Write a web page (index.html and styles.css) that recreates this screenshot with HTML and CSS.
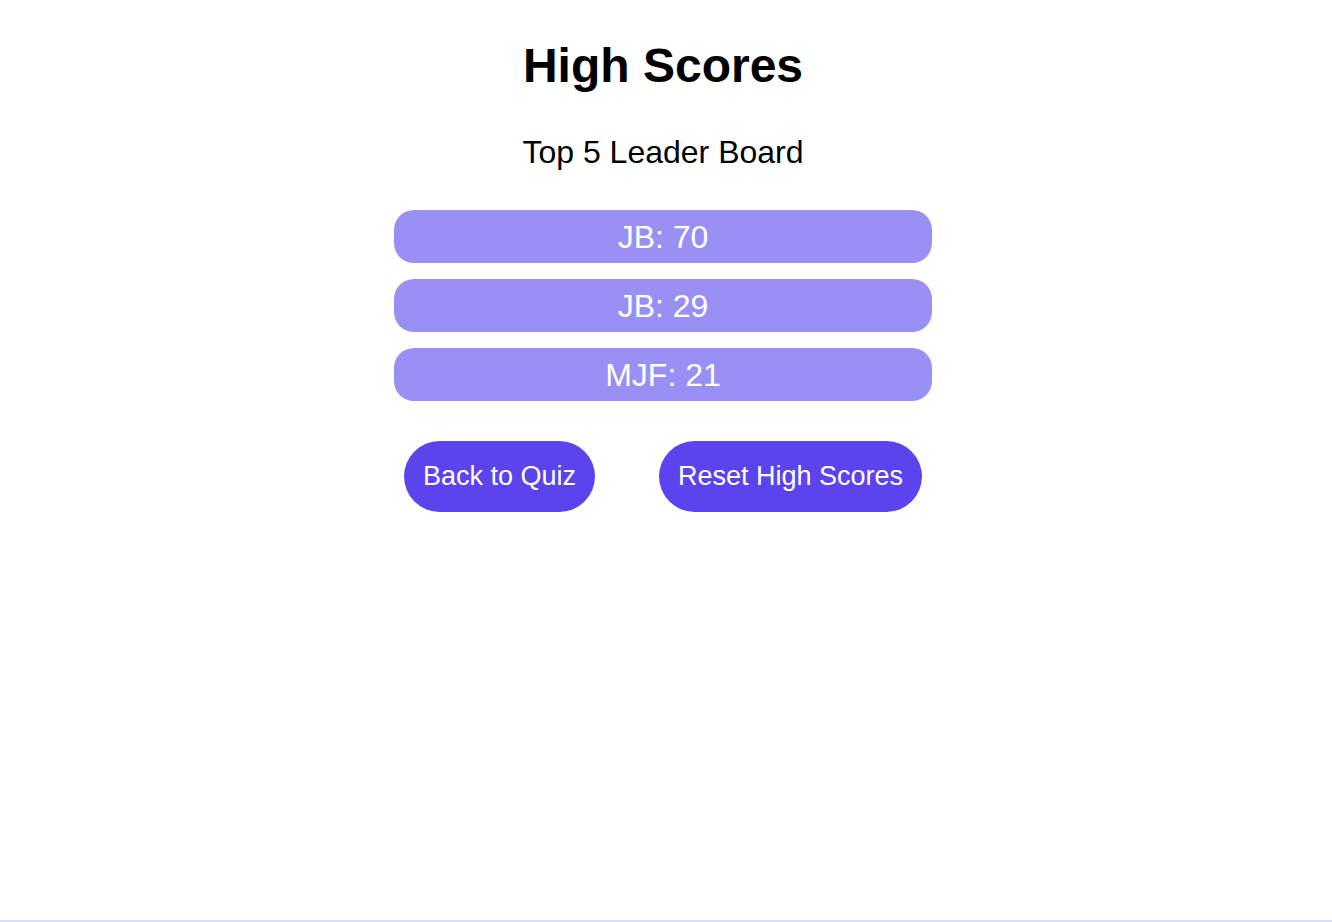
FILE: index.html
```html
<!DOCTYPE html>
<html lang="en">
<head>
<meta charset="utf-8">
<title>High Scores</title>
<link rel="stylesheet" href="styles.css">
</head>
<body>
<main class="board">
<h1 class="title">High Scores</h1>
<p class="subtitle">Top 5 Leader Board</p>
<ul class="scores">
<li class="score">JB: 70</li>
<li class="score">JB: 29</li>
<li class="score">MJF: 21</li>
</ul>
<div class="actions">
<button class="button" type="button">Back to Quiz</button>
<button class="button" type="button">Reset High Scores</button>
</div>
</main>
</body>
</html>
```
FILE: styles.css
```css
* {
  box-sizing: border-box;
}

body {
  margin: 0;
  min-height: 100vh;
  padding: 38px 6px 0 0;
  display: flex;
  flex-direction: column;
  align-items: center;
  background: #fff;
  border-bottom: 2px solid #d5e0fa;
  color: #000;
  font-family: Helvetica, "Liberation Sans", Arial, sans-serif;
}

.board {
  display: flex;
  flex-direction: column;
  text-align: center;
}

.title {
  margin: 0 0 40px;
  font-size: 48px;
  line-height: 56px;
}

.subtitle {
  margin: 0 0 40px;
  font-size: 32px;
  line-height: 36px;
}

.scores {
  display: grid;
  gap: 16px;
  margin: 0 0 40px;
  padding: 0;
  list-style: none;
}

.score {
  padding: 9px 8px 8px;
  border-radius: 20px;
  background: #9990f4;
  color: #fff;
  font-size: 32px;
  line-height: 36px;
}

.actions {
  display: flex;
  gap: 64px;
  padding: 0 10px;
}

.button {
  padding: 20px 19px;
  border: 0;
  border-radius: 40px;
  background: #5b43ee;
  color: #fff;
  font: inherit;
  font-size: 27px;
  line-height: 31px;
  white-space: nowrap;
}
```
